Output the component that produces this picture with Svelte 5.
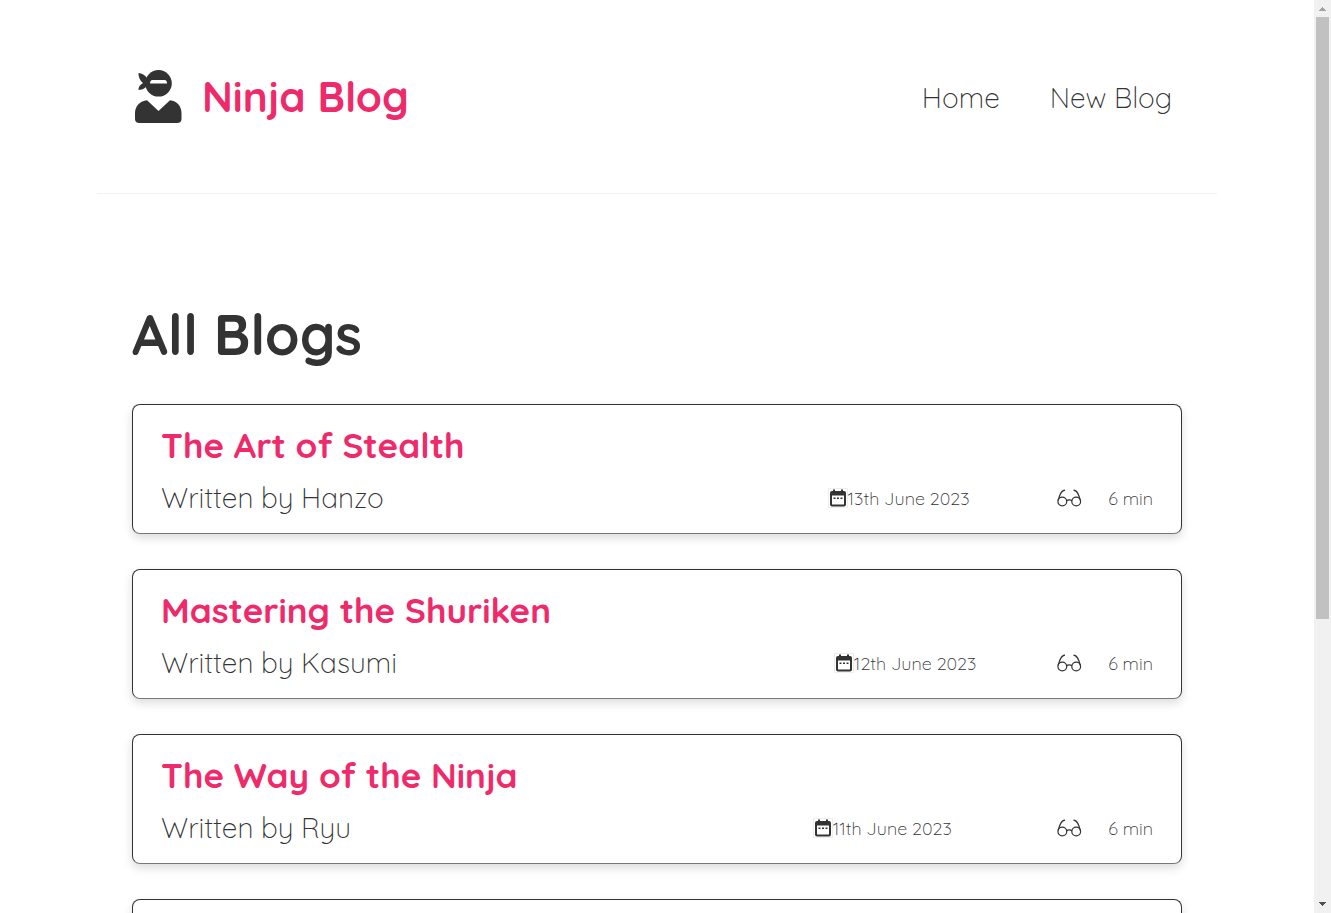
<script>
  const blogs = [
    { title: 'The Art of Stealth', author: 'Hanzo', date: '13th June 2023', minutes: 6 },
    { title: 'Mastering the Shuriken', author: 'Kasumi', date: '12th June 2023', minutes: 6 },
    { title: 'The Way of the Ninja', author: 'Ryu', date: '11th June 2023', minutes: 6 },
    { title: '', author: '', date: '', minutes: 0 }
  ];
</script>

<div class="shell">
  <div class="page">
    <header>
      <a class="brand" href="#home">
        <svg class="ninja" viewBox="0 0 48 54" aria-hidden="true">
          <circle cx="24.500" cy="13.300" r="13.300" fill="#333" />
          <path d="M4.500 3c3.500.2 6.500 2 8.500 5l2 4-2 3c-.5 2.500-3.500 4.700-8.500 5-.3-3 1.500-5.200 4.500-7C6 10.500 4.200 6.500 4.500 3z" fill="#333" />
          <path d="M18.500 10h12q2.500 0 2.500 3.500H16Q16 10 18.500 10z" fill="#fff" />
          <path d="M13 30.300 24.500 41 36 30.300c6.800.5 11.500 6 11.500 12.700V49q0 4-4.500 4H5.500Q1 53 1 49v-6c0-6.700 5.200-12.200 12-12.700z" fill="#333" />
        </svg>
        <span>Ninja Blog</span>
      </a>
      <nav>
        <a href="#home">Home</a>
        <a href="#new">New Blog</a>
      </nav>
    </header>
    <main>
      <h1>All Blogs</h1>
      {#each blogs as blog}
        <article>
          <h2>{blog.title}</h2>
          {#if blog.author}
            <div class="meta">
              <p>Written by {blog.author}</p>
              <span class="date">
                <svg class="calendar" viewBox="0 0 20 20" aria-hidden="true">
                  <rect x=".5" y=".5" width="19" height="19" fill="none" stroke="#eee" />
                  <path d="M4 3h1V1.500h2V3h6V1.500h2V3h1q2 0 2 2v11.500q0 2-2 2H4q-2 0-2-2V5q0-2 2-2zM4 7.500v8.500q0 .5.5.5h11q.5 0 .5-.5V7.500z" fill="#333" fill-rule="evenodd" />
                  <path d="M5.500 9.500h2v1.500h-2zM9 9.500h2v1.500H9zM12.500 9.500h2v1.500h-2z" fill="#333" />
                </svg>
                <span>{blog.date}</span>
              </span>
              <span class="read">
                <svg class="glasses" viewBox="0 0 26 18" fill="none" stroke="#333" stroke-width="1.200" aria-hidden="true">
                  <circle cx="6.300" cy="12.500" r="4.400" />
                  <circle cx="20.200" cy="12.500" r="4.400" />
                  <path d="M10.600 12c1.200-1.500 4.100-1.500 5.300 0M2.100 11.500C3.300 7 4.700 1.500 9 1.200M24.400 11.500C23.200 7 21.800 1.500 17.500 1.200" />
                </svg>
                <span>{blog.minutes} min</span>
              </span>
            </div>
          {/if}
        </article>
      {/each}
    </main>
  </div>
  <div class="scrollbar" aria-hidden="true">
    <svg viewBox="0 0 17 17"><path d="M8 7h1v1h1v1h1v1h1v1H5v-1h1V9h1V8h1z" fill="#a3a3a3" /></svg>
    <div class="track"><div class="thumb"></div></div>
    <svg viewBox="0 0 17 17"><path d="M5 6h7v1h-1v1h-1v1H9v1H8V9H7V8H6V7H5z" fill="#505050" /></svg>
  </div>
</div>

<style>
  .shell {
    display: flex;
    height: 100vh;
    overflow: hidden;
    background: #fff;
    color: #333;
    font-family: Quicksand, Lato, sans-serif;
    font-weight: 350;
  }
  .page {
    flex: 1;
    min-width: 0;
    overflow-y: auto;
    scrollbar-width: none;
  }
  header {
    display: flex;
    align-items: center;
    justify-content: space-between;
    box-sizing: border-box;
    max-width: 1120px;
    margin: 0 auto;
    padding: 70px 35px 69px;
    border-bottom: 1px solid #f2f2f2;
  }
  a {
    color: inherit;
    text-decoration: none;
  }
  .brand {
    display: flex;
    align-items: center;
    gap: 20px;
    padding-left: 2px;
    color: #ee2a6b;
    font-size: 42px;
    font-weight: 700;
    line-height: 52px;
  }
  .ninja {
    width: 48px;
    height: 54px;
  }
  nav {
    display: flex;
    gap: 50px;
    padding: 2px 10px 0 0;
    font-size: 28px;
    line-height: 36px;
  }
  main {
    max-width: 1050px;
    margin: 0 auto;
    padding: 105px 35px 0;
  }
  h1 {
    margin: 0 0 35px;
    font-size: 56px;
    font-weight: 700;
    line-height: 70px;
  }
  article {
    box-sizing: border-box;
    min-height: 130px;
    margin-bottom: 35px;
    padding: 18px 28px 13px;
    border: 1px solid #333;
    border-bottom-color: #777;
    border-radius: 8px;
    box-shadow: 0 4px 10px rgba(0, 0, 0, 0.14);
  }
  h2 {
    margin: 0 0 9px;
    color: #ee2a6b;
    font-size: 35px;
    font-weight: 700;
    line-height: 44px;
  }
  .meta {
    display: flex;
    align-items: center;
    justify-content: space-between;
    font-size: 18px;
  }
  p {
    margin: 0;
    font-size: 28px;
    line-height: 44px;
  }
  .date {
    display: flex;
    align-items: center;
    margin-left: 36%;
  }
  .calendar {
    width: 20px;
    height: 20px;
  }
  .read {
    display: flex;
    align-items: center;
    gap: 26px;
  }
  .glasses {
    width: 26px;
    height: 18px;
  }
  .scrollbar {
    display: flex;
    flex-direction: column;
    width: 17px;
    background: #f1f1f1;
  }
  .scrollbar svg {
    width: 17px;
    height: 17px;
  }
  .track {
    flex: 1;
    padding: 0 2px;
  }
  .thumb {
    height: 68.5%;
    background: #c1c1c1;
  }
</style>
